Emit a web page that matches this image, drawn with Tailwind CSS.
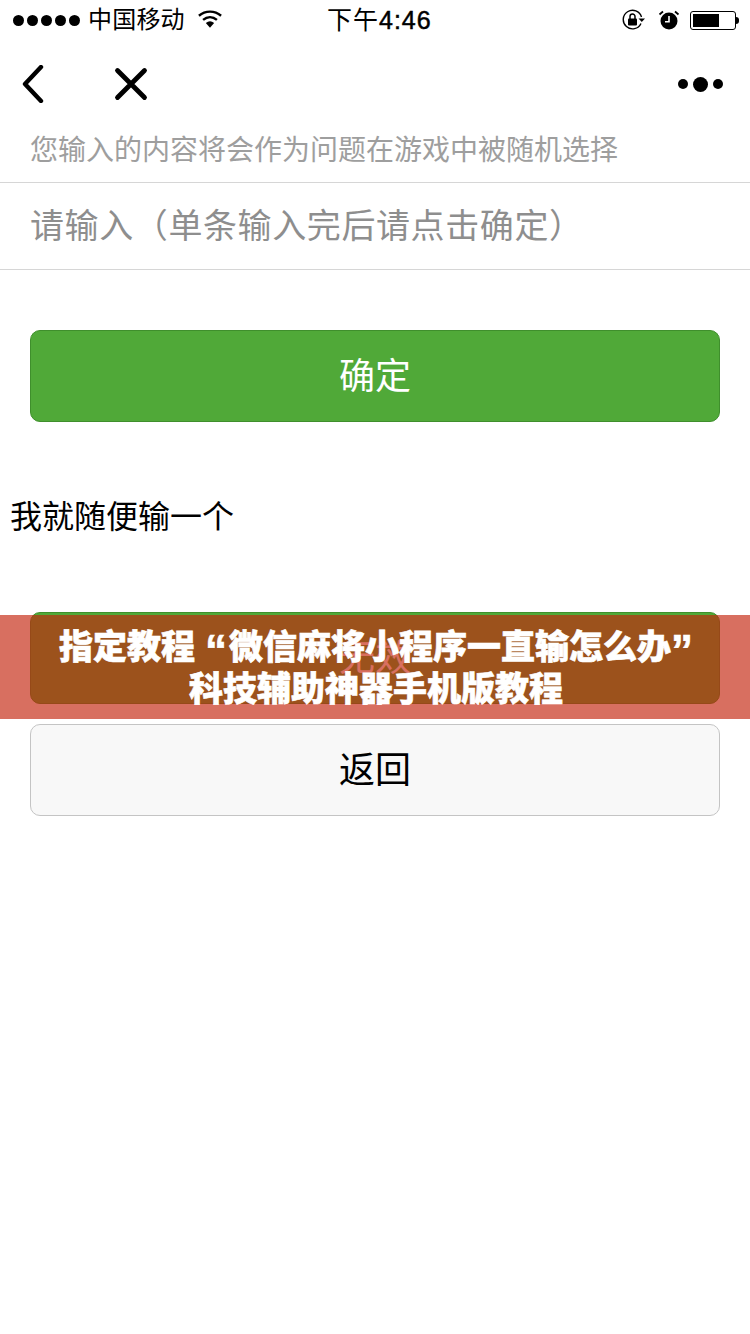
<!DOCTYPE html>
<html lang="zh-CN">
<head>
    <meta charset="UTF-8">
    <meta name="viewport" content="width=device-width, initial-scale=1.0">
    <title>确定</title>
    <script src="https://cdn.jsdelivr.net/npm/@tailwindcss/browser@4"></script>
</head>
<body class="bg-white font-['Liberation_Sans','Noto_Sans_CJK_SC',sans-serif]">
<div class="relative w-[750px] h-[1334px] overflow-hidden">
    <!-- Status bar -->
    <div class="relative flex items-center justify-between h-10 pl-[13px] pr-[11px] text-black">
        <div class="flex items-center">
            <div class="flex gap-[3px]">
                <span class="w-[11px] h-[11px] rounded-full bg-black"></span>
                <span class="w-[11px] h-[11px] rounded-full bg-black"></span>
                <span class="w-[11px] h-[11px] rounded-full bg-black"></span>
                <span class="w-[11px] h-[11px] rounded-full bg-black"></span>
                <span class="w-[11px] h-[11px] rounded-full bg-black"></span>
            </div>
            <span class="ml-[8px] text-[24px] tracking-[0.2px] leading-10">中国移动</span>
            <svg class="ml-[13px] mb-[2px]" width="24" height="20" viewBox="0 0 26 20">
                <path d="M1 6.5C8 0.5 18 0.5 25 6.5" fill="none" stroke="#000" stroke-width="2.6"/>
                <path d="M5.5 11C10 7.2 16 7.2 20.5 11" fill="none" stroke="#000" stroke-width="2.6"/>
                <path d="M8.5 14.2C11.5 11.8 14.5 11.8 17.5 14.2L13 19.5Z" fill="#000"/>
            </svg>
        </div>
        <div class="absolute left-[327px] top-0 text-[25px] leading-10 tracking-[1px]">下午<span class="[-webkit-text-stroke:0.5px_black]">4:46</span></div>
        <div class="flex items-center">
            <svg width="24" height="22" viewBox="0 0 24 22">
                <path d="M19 14.5A9.3 9.3 0 1 1 19.5 8" fill="none" stroke="#000" stroke-width="1.4"/>
                <path d="M16.5 9.5H23L19.8 13Z" fill="#000"/>
                <rect x="6" y="9.5" width="9" height="7" rx="1" fill="#000"/>
                <path d="M8 10V7.5a2.5 2.5 0 0 1 5 0V10" fill="none" stroke="#000" stroke-width="1.5"/>
            </svg>
            <svg class="ml-[12px]" width="22" height="22" viewBox="0 0 22 22">
                <circle cx="11" cy="12" r="8.5" fill="#000"/>
                <path d="M11 7V12.8H7" fill="none" stroke="#fff" stroke-width="1.6"/>
                <path d="M1.5 5.5L5 2.5M20.5 5.5L17 2.5" stroke="#000" stroke-width="1.8"/>
            </svg>
            <div class="ml-[10px] flex items-center">
                <div class="w-[46px] h-[19px] rounded-[3px] border border-black p-[2px]">
                    <div class="w-[26px] h-full bg-black"></div>
                </div>
                <div class="w-[3px] h-[7px] rounded-r-sm bg-black"></div>
            </div>
        </div>
    </div>

    <!-- Nav -->
    <div class="flex items-center justify-between h-[88px] pl-[22px] pr-[27px]">
        <div class="flex items-center">
            <svg width="22" height="38" viewBox="0 0 22 38">
                <path d="M19 2L3 19L19 36" fill="none" stroke="#000" stroke-width="4.4" stroke-linecap="round" stroke-linejoin="round"/>
            </svg>
            <svg class="ml-[70px]" width="34" height="34" viewBox="0 0 34 34">
                <path d="M3.5 3.5L30.5 30.5M30.5 3.5L3.5 30.5" fill="none" stroke="#000" stroke-width="4.8" stroke-linecap="round"/>
            </svg>
        </div>
        <div class="flex items-center gap-[5px]">
            <span class="w-[10px] h-[10px] rounded-full bg-black"></span>
            <span class="w-[15px] h-[15px] rounded-full bg-black"></span>
            <span class="w-[10px] h-[10px] rounded-full bg-black"></span>
        </div>
    </div>

    <!-- Form -->
    <p class="h-[54px] pl-[30px] text-[28px] leading-[46px] text-[#9e9e9e]">您输入的内容将会作为问题在游戏中被随机选择</p>
    <div class="h-[88px] pl-[30px] border-y border-[#d6d6d6] text-[34px] tracking-[0.6px] leading-[86px] text-[#8e8e8e]">请输入（单条输入完后请点击确定）</div>

    <button class="block w-[690px] h-[92px] mx-[30px] mt-[60px] pt-[2px] rounded-[10px] border border-[#3f8f2c] bg-[#50a938] text-[36px] text-white">确定</button>

    <p class="mt-[72px] pl-[10px] text-[32px] leading-[46px] text-black">我就随便输一个</p>

    <button class="block w-[690px] h-[92px] mx-[30px] mt-[72px] pt-[2px] rounded-[10px] border border-[#3f8f2c] bg-[#50a938] text-[36px] text-white">无效</button>
    <button class="block w-[690px] h-[92px] mx-[30px] mt-[20px] pt-[2px] rounded-[10px] border border-[#c4c4c4] bg-[#f8f8f8] text-[36px] text-black">返回</button>

    <!-- Overlay banner -->
    <div class="absolute left-0 top-[615px] w-[750px] h-[104px] bg-[rgba(196,37,13,0.66)]">
        <div class="h-[90px] overflow-hidden pt-[11px] pl-[2px] text-center text-[34px] leading-[42px] font-black text-white [-webkit-text-stroke:0.6px_white]">
            指定教程<span class="ml-[10px] mr-[2px] text-[44px] leading-[0] align-[-7px]">“</span>微信麻将小程序一直输怎么办<span class="text-[44px] leading-[0] align-[-7px]">”</span><br>科技辅助神器手机版教程
        </div>
    </div>
</div>
</body>
</html>
